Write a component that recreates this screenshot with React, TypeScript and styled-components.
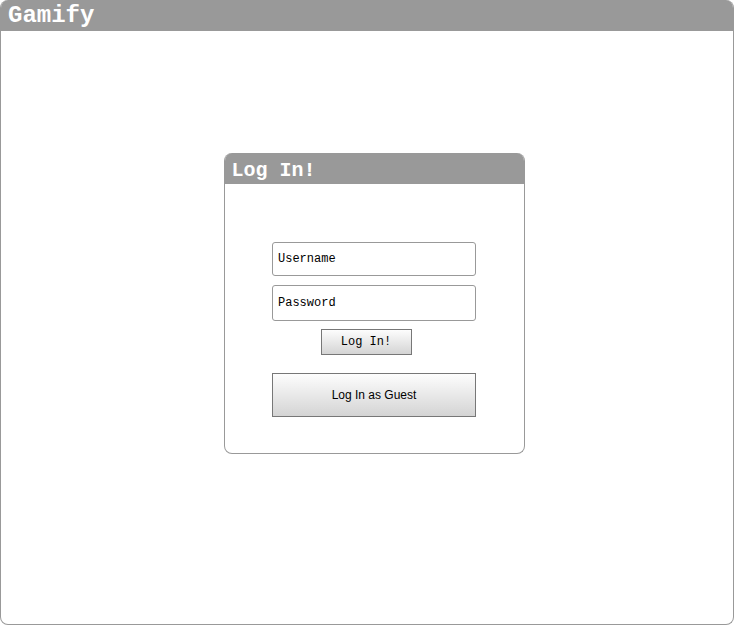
import React from "react";
import styled, { createGlobalStyle } from "styled-components";

const Global = createGlobalStyle`
  html, body { margin: 0; padding: 0; background: #fff; }
  body { font-family: "Liberation Sans", Arial, sans-serif; }
`;

const Frame = styled.div`
  box-sizing: border-box;
  width: 734px;
  height: 625px;
  border: 1px solid #999;
  border-top: none;
  border-radius: 8px;
  display: flex;
  flex-direction: column;
  overflow: hidden;
`;

const Bar = styled.div<{ $size: number; $h: number; $drop?: number }>`
  box-sizing: border-box;
  background: #999;
  color: #fff;
  height: ${(p) => p.$h}px;
  display: flex;
  align-items: center;
  padding-left: 7px;
  padding-top: ${(p) => p.$drop ?? 0}px;
  font-family: "Liberation Mono", "Courier New", monospace;
  font-weight: bold;
  font-size: ${(p) => p.$size}px;
  flex-shrink: 0;
`;

const Stage = styled.div`
  flex: 1;
  display: flex;
  justify-content: center;
  align-items: flex-start;
  padding-top: 122px;
  padding-left: 14px;
`;

const Card = styled.div`
  box-sizing: border-box;
  width: 301px;
  height: 301px;
  border: 1px solid #999;
  border-top: none;
  border-radius: 8px;
  overflow: hidden;
  display: flex;
  flex-direction: column;
`;

const Form = styled.div`
  display: flex;
  flex-direction: column;
  align-items: center;
  padding-top: 58px;
`;

const Field = styled.input<{ $h: number }>`
  box-sizing: border-box;
  width: 204px;
  height: ${(p) => p.$h}px;
  border: 1px solid #999;
  border-radius: 3px;
  padding: 0 5px;
  font-family: "Liberation Mono", "Courier New", monospace;
  font-size: 12px;
  color: #000;
  margin-bottom: 9px;
  outline: none;
  &::placeholder { color: #000; opacity: 1; }
`;

const SubmitRow = styled.div`
  width: 204px;
  display: flex;
  justify-content: center;
  padding-right: 16px;
  box-sizing: border-box;
`;

const Button = styled.button<{ $w: number; $h: number; $mono?: boolean }>`
  box-sizing: border-box;
  width: ${(p) => p.$w}px;
  height: ${(p) => p.$h}px;
  border: 1px solid #777;
  background: linear-gradient(#fdfdfd, #d4d4d4);
  font-family: ${(p) =>
    p.$mono ? `"Liberation Mono", "Courier New", monospace` : `"Liberation Sans", Arial, sans-serif`};
  font-size: 12px;
  color: #000;
  padding: 0;
  border-radius: 0;
`;

const GuestWrap = styled.div`
  margin-top: 18px;
`;

export default function App() {
  return (
    <>
      <Global />
      <Frame>
        <Bar $size={24} $h={31}>Gamify</Bar>
        <Stage>
          <Card>
            <Bar $size={20} $h={31} $drop={3}>Log In!</Bar>
            <Form>
              <Field $h={34} placeholder="Username" />
              <Field $h={36} placeholder="Password" type="password" />
              <SubmitRow>
                <Button $w={91} $h={26} $mono style={{ marginTop: -1 }}>Log In!</Button>
              </SubmitRow>
              <GuestWrap>
                <Button $w={204} $h={44}>Log In as Guest</Button>
              </GuestWrap>
            </Form>
          </Card>
        </Stage>
      </Frame>
    </>
  );
}
